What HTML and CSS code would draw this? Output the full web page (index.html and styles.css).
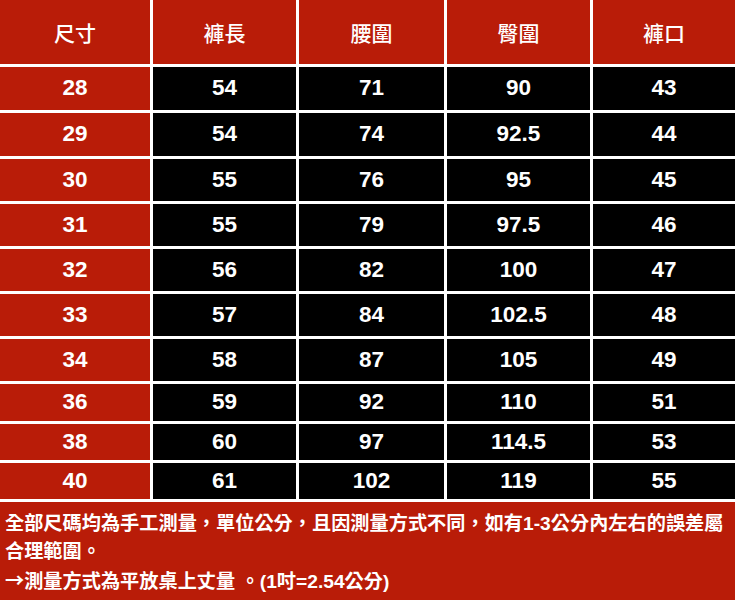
FILE: index.html
```html
<!DOCTYPE html>
<html lang="zh-Hant">
<head>
<meta charset="utf-8">
<title>尺寸表</title>
<link rel="stylesheet" href="styles.css">
</head>
<body>
<div class="chart">
  <div class="table">
    <div class="cell head">尺寸</div>
    <div class="cell head">褲長</div>
    <div class="cell head">腰圍</div>
    <div class="cell head">臀圍</div>
    <div class="cell head">褲口</div>

    <div class="cell size">28</div><div class="cell val">54</div><div class="cell val">71</div><div class="cell val">90</div><div class="cell val">43</div>
    <div class="cell size">29</div><div class="cell val">54</div><div class="cell val">74</div><div class="cell val">92.5</div><div class="cell val">44</div>
    <div class="cell size">30</div><div class="cell val">55</div><div class="cell val">76</div><div class="cell val">95</div><div class="cell val">45</div>
    <div class="cell size">31</div><div class="cell val">55</div><div class="cell val">79</div><div class="cell val">97.5</div><div class="cell val">46</div>
    <div class="cell size">32</div><div class="cell val">56</div><div class="cell val">82</div><div class="cell val">100</div><div class="cell val">47</div>
    <div class="cell size">33</div><div class="cell val">57</div><div class="cell val">84</div><div class="cell val">102.5</div><div class="cell val">48</div>
    <div class="cell size">34</div><div class="cell val">58</div><div class="cell val">87</div><div class="cell val">105</div><div class="cell val">49</div>
    <div class="cell size">36</div><div class="cell val">59</div><div class="cell val">92</div><div class="cell val">110</div><div class="cell val">51</div>
    <div class="cell size">38</div><div class="cell val">60</div><div class="cell val">97</div><div class="cell val">114.5</div><div class="cell val">53</div>
    <div class="cell size">40</div><div class="cell val">61</div><div class="cell val">102</div><div class="cell val">119</div><div class="cell val">55</div>
  </div>
  <div class="notes">
    <p>全部尺碼均為手工測量，單位公分，且因測量方式不同，如有1-3公分內左右的誤差屬合理範圍。</p>
    <p><span class="arrow">→</span>測量方式為平放桌上丈量 。(1吋=2.54公分)</p>
  </div>
</div>
</body>
</html>
```

FILE: styles.css
```css
html, body {
  margin: 0;
  padding: 0;
  background: #b91c08;
}

.chart {
  width: 735px;
  height: 600px;
  background: #b91c08;
  font-family: "Liberation Sans", "Noto Sans CJK TC", sans-serif;
  color: #fff;
}

.table {
  display: grid;
  grid-template-columns: 150px 143px 145px 143px 142px;
  grid-template-rows: 64px 43px 43px 42px 42px 42px 42px 42px 37px 36px 36px;
  gap: 3px;
  background: #fff;
  border-bottom: 3px solid #fff;
}

.cell {
  display: flex;
  align-items: center;
  justify-content: center;
  font-weight: bold;
  font-size: 22.5px;
  line-height: 1;
}

.head {
  background: #b91c08;
  font-weight: 500;
  font-size: 21px;
  font-family: "Noto Sans CJK TC", sans-serif;
}

.size {
  background: #b91c08;
}

.val {
  background: #000;
}

.notes {
  padding: 8px 4px 0 5px;
  font-weight: bold;
  font-size: 19.2px;
  line-height: 28px;
}

.notes p {
  margin: 0;
}

.arrow {
  font-family: "Noto Sans CJK TC", sans-serif;
}
```
